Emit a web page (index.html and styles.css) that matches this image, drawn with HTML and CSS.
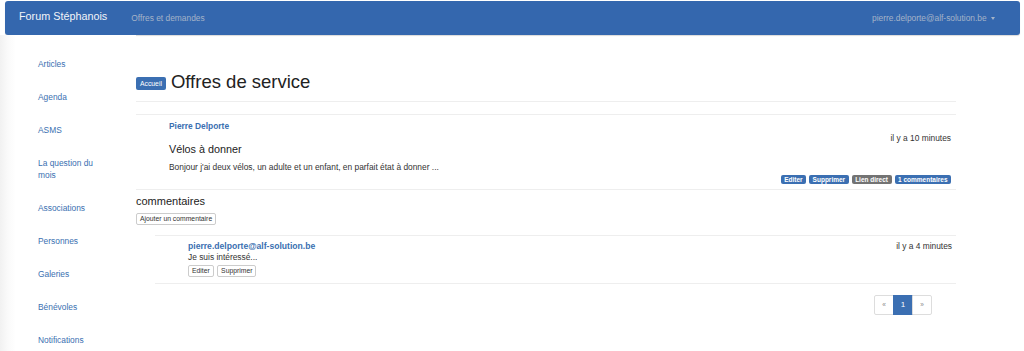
FILE: index.html
```html
<!DOCTYPE html>
<html lang="fr">
<head>
    <meta charset="UTF-8">
    <meta name="viewport" content="width=device-width, initial-scale=1.0">
    <title>Offres de service</title>
    <link rel="stylesheet" href="styles.css">
</head>
<body>

<nav class="navbar">
    <a class="brand" href="#">Forum Stéphanois</a>
    <a class="nav-link" href="#">Offres et demandes</a>
    <a class="nav-user" href="#">pierre.delporte@alf-solution.be <span class="caret"></span></a>
</nav>

<div class="layout">
    <ul class="sidebar">
        <li><a href="#">Articles</a></li>
        <li><a href="#">Agenda</a></li>
        <li><a href="#">ASMS</a></li>
        <li><a href="#">La question du mois</a></li>
        <li><a href="#">Associations</a></li>
        <li><a href="#">Personnes</a></li>
        <li><a href="#">Galeries</a></li>
        <li><a href="#">Bénévoles</a></li>
        <li><a href="#">Notifications</a></li>
    </ul>

    <div class="main">
        <div class="page-header">
            <span class="label label-primary">Accueil</span>
            <h1>Offres de service</h1>
        </div>

        <div class="post">
            <div class="post-author"><a href="#">Pierre Delporte</a></div>
            <div class="post-date">il y a 10 minutes</div>
            <h4>Vélos à donner</h4>
            <p>Bonjour j'ai deux vélos, un adulte et un enfant, en parfait état à donner ...</p>
            <div class="post-actions">
                <span class="label label-primary">Editer</span>
                <span class="label label-primary">Supprimer</span>
                <span class="label label-default">Lien direct</span>
                <span class="label label-primary">1 commentaires</span>
            </div>
        </div>

        <h3>commentaires</h3>
        <button class="btn">Ajouter un commentaire</button>

        <div class="comment">
            <div class="comment-head">
                <a href="#">pierre.delporte@alf-solution.be</a>
                <span class="comment-date">il y a 4 minutes</span>
            </div>
            <p>Je suis intéressé...</p>
            <div class="comment-actions">
                <button class="btn">Editer</button>
                <button class="btn">Supprimer</button>
            </div>
        </div>

        <ul class="pagination">
            <li><a href="#">&laquo;</a></li>
            <li class="active"><a href="#">1</a></li>
            <li><a href="#">&raquo;</a></li>
        </ul>
    </div>
</div>

</body>
</html>
```

FILE: styles.css
```css
body {
    font-family: "Liberation Sans", Arial, sans-serif;
    font-size: 8.4px;
    color: #333;
    margin: 0;
    background: #fff;
}
a {
    color: #3a6fb1;
    text-decoration: none;
}
.navbar {
    display: flex;
    align-items: center;
    height: 34px;
    margin: 1px 4px 0 5px;
    background-color: #3467ae;
    border-radius: 3px;
    box-shadow: 0 1px 1px rgba(0, 0, 0, 0.15);
}
.brand {
    color: #f2f4f8;
    font-size: 10.8px;
    padding: 0 0 4px 14px;
}
.nav-link {
    color: #a4b3c8;
    font-size: 8.4px;
    margin-left: 24px;
}
.nav-user {
    color: #a4b3c8;
    font-size: 8.4px;
    margin-left: auto;
    margin-right: 25px;
}
.caret {
    display: inline-block;
    width: 0;
    height: 0;
    margin-left: 2px;
    vertical-align: middle;
    border-top: 3px solid #a4b3c8;
    border-left: 2.5px solid transparent;
    border-right: 2.5px solid transparent;
}
.layout {
    display: flex;
    min-height: 316px;
}
.sidebar {
    list-style: none;
    width: 136px;
    margin: 0;
    padding: 23px 0 0 38px;
    box-sizing: border-box;
    background: linear-gradient(to right, #f1f1f1, #fafafa 8px, #fff 16px);
    line-height: 12px;
}
.sidebar li {
    width: 60px;
    margin-bottom: 21px;
}
.main {
    width: 820px;
}
.page-header {
    display: flex;
    align-items: center;
    margin-top: 36px;
    padding-bottom: 8px;
    border-bottom: 1px solid #eee;
}
.page-header h1 {
    font-size: 18.5px;
    font-weight: normal;
    line-height: 22px;
    margin: 0 0 0 5px;
    color: #222;
}
.label {
    display: inline-block;
    font-weight: bold;
    color: #fff;
    border-radius: 2px;
    font-size: 6.5px;
    line-height: 9px;
    padding: 0 3.5px;
}
.page-header .label {
    font-weight: normal;
    font-size: 6.8px;
    line-height: 13px;
    padding: 0 4px;
    margin-top: 2px;
}
.label-primary {
    background-color: #3b6fb2;
}
.label-default {
    background-color: #737373;
}
.post {
    margin-top: 12px;
    border-top: 1px solid #eee;
    border-bottom: 1px solid #eee;
    padding: 5px 5px 5px 33px;
    line-height: 12px;
}
.post-author a {
    font-weight: bold;
}
.post-date {
    text-align: right;
}
.post h4 {
    font-size: 10.8px;
    font-weight: normal;
    line-height: 12px;
    margin: -1px 0 0;
    color: #222;
}
.post p {
    margin: 6px 0 0;
}
.post-actions {
    display: flex;
    justify-content: flex-end;
    gap: 3px;
    margin-top: 2px;
}
h3 {
    font-size: 11px;
    font-weight: normal;
    line-height: 12px;
    margin: 5px 0 0;
    color: #222;
}
.btn {
    font-family: inherit;
    font-size: 6.8px;
    color: #333;
    background: #fff;
    border: 1px solid #ccc;
    border-radius: 2px;
    height: 12px;
    line-height: 10px;
    padding: 0 3px;
    margin: 6px 0 0;
}
.comment {
    margin: 10px 0 0 19px;
    border-top: 1px solid #eee;
    border-bottom: 1px solid #eee;
    padding: 4px 4px 6px 33px;
    line-height: 12px;
}
.comment-head {
    display: flex;
    justify-content: space-between;
}
.comment-head a {
    font-weight: bold;
    font-size: 8.6px;
}
.comment p {
    margin: 0;
    line-height: 11px;
}
.comment-actions {
    margin-top: 1px;
}
.comment-actions .btn {
    margin: 0 1px 0 0;
}
.pagination {
    display: flex;
    justify-content: flex-end;
    list-style: none;
    margin: 11px 24px 0 0;
    padding: 0;
}
.pagination a {
    display: block;
    width: 18px;
    height: 18px;
    line-height: 18px;
    text-align: center;
    border: 1px solid #ddd;
    margin-left: -1px;
    font-size: 6.5px;
    color: #888;
}
.pagination li:first-child a {
    border-radius: 2px 0 0 2px;
}
.pagination li:last-child a {
    border-radius: 0 2px 2px 0;
}
.pagination .active a {
    background-color: #3b6fb2;
    border-color: #3b6fb2;
    color: #fff;
    font-size: 8px;
}
```
